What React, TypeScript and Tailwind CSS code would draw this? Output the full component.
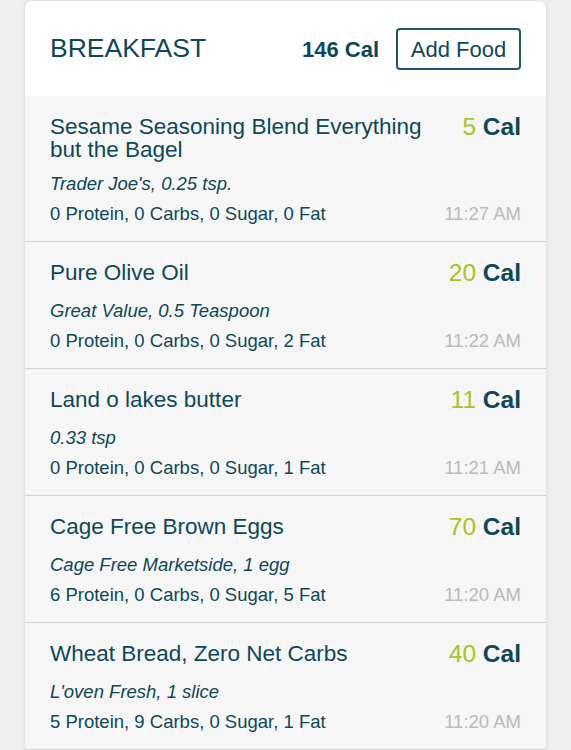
import * as React from "react";

type Entry = {
  name: string;
  detail: string;
  cal: number;
  protein: number;
  carbs: number;
  sugar: number;
  fat: number;
  time: string;
};

const entries: Entry[] = [
  {
    name: "Sesame Seasoning Blend Everything but the Bagel",
    detail: "Trader Joe's, 0.25 tsp.",
    cal: 5,
    protein: 0,
    carbs: 0,
    sugar: 0,
    fat: 0,
    time: "11:27 AM",
  },
  {
    name: "Pure Olive Oil",
    detail: "Great Value, 0.5 Teaspoon",
    cal: 20,
    protein: 0,
    carbs: 0,
    sugar: 0,
    fat: 2,
    time: "11:22 AM",
  },
  {
    name: "Land o lakes butter",
    detail: "0.33 tsp",
    cal: 11,
    protein: 0,
    carbs: 0,
    sugar: 0,
    fat: 1,
    time: "11:21 AM",
  },
  {
    name: "Cage Free Brown Eggs",
    detail: "Cage Free Marketside, 1 egg",
    cal: 70,
    protein: 6,
    carbs: 0,
    sugar: 0,
    fat: 5,
    time: "11:20 AM",
  },
  {
    name: "Wheat Bread, Zero Net Carbs",
    detail: "L'oven Fresh, 1 slice",
    cal: 40,
    protein: 5,
    carbs: 9,
    sugar: 0,
    fat: 1,
    time: "11:20 AM",
  },
];

function FoodRow({ entry }: { entry: Entry }) {
  return (
    <div className="border-b border-[#cfcfcf] bg-[#f6f6f6] px-[25px] pt-[19px] pb-[15px]">
      <div className="flex items-start justify-between gap-6">
        <div className="text-[22.5px] leading-[23px]">{entry.name}</div>
        <div className="shrink-0 whitespace-nowrap pb-[4px] text-[24.5px] leading-[23px]">
          <span className="text-[#a3c61c]">{entry.cal}</span>{" "}
          <span className="font-bold">Cal</span>
        </div>
      </div>
      <div className="mt-[11px] text-[18.5px] italic leading-[24px]">{entry.detail}</div>
      <div className="mt-[6px] flex items-center justify-between text-[18.5px] leading-[24px]">
        <span>
          {entry.protein} Protein, {entry.carbs} Carbs, {entry.sugar} Sugar, {entry.fat} Fat
        </span>
        <span className="text-[#bababa]">{entry.time}</span>
      </div>
    </div>
  );
}

export default function App() {
  return (
    <div
      className="min-h-[750px] bg-[#efefef] px-[25px] pt-[1px] text-[#0d4858]"
      style={{ fontFamily: '"Liberation Sans", Arial, sans-serif' }}
    >
      <div className="overflow-hidden rounded-t-[7px] bg-white shadow-[0_0_4px_rgba(0,0,0,0.12)]">
        <div className="flex h-[95px] items-center px-[25px] pt-[1px]">
          <h2 className="flex-1 text-[26.5px]">BREAKFAST</h2>
          <span className="mr-[17px] text-[22px] font-bold">146 Cal</span>
          <button className="h-[42px] w-[125px] rounded-[4px] border-2 border-[#1d5868] text-[22px] text-[#0d4858]">
            Add Food
          </button>
        </div>
        {entries.map((e) => (
          <FoodRow key={e.name + e.time} entry={e} />
        ))}
      </div>
    </div>
  );
}
